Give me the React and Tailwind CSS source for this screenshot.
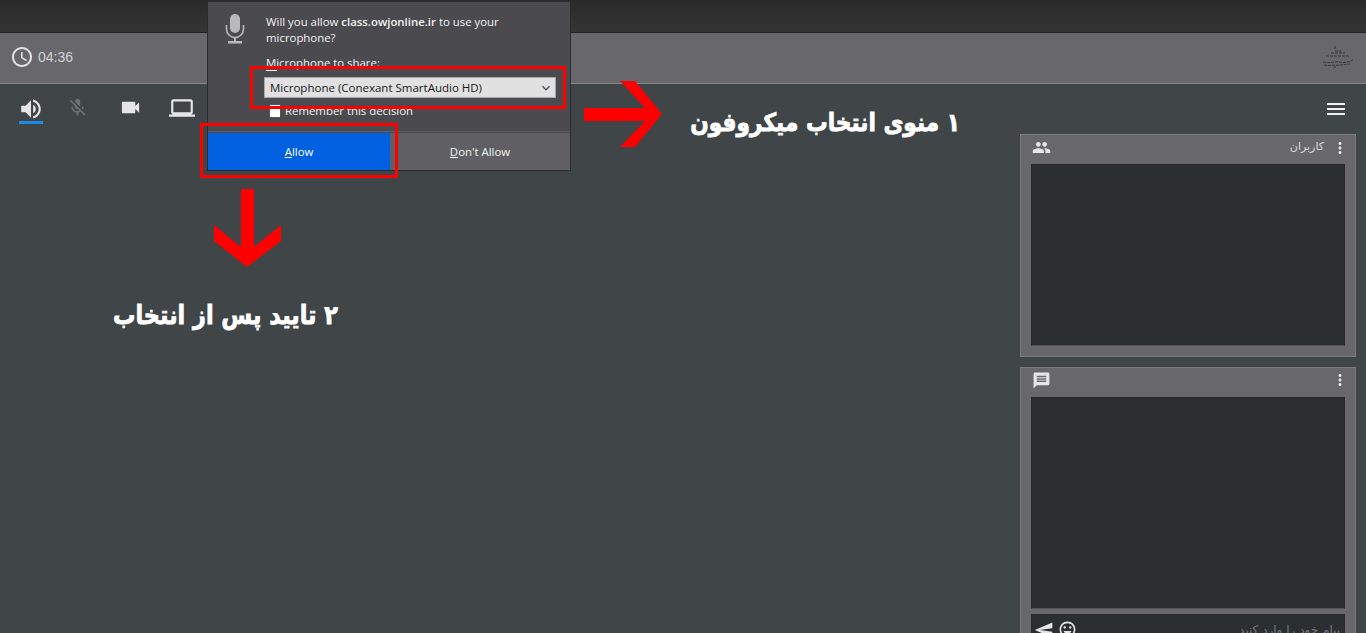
import React from "react";
import { MdVolumeUp, MdMicOff, MdVideocam, MdLaptop, MdMenu, MdPeople, MdMoreVert, MdMessage, MdSend, MdTagFaces, MdAccessTime, MdKeyboardArrowDown } from "react-icons/md";

const persian = { fontFamily: '"DejaVu Sans", sans-serif' };

function Dialog() {
  return (
    <div className="absolute left-[207px] top-[1px] w-[364px] h-[170px] bg-[#4a4a4f] border border-[#2c2c2e] text-[#f4f4f4] text-[11.4px] font-['Open_Sans','Noto_Sans',sans-serif]">
      <svg className="absolute left-[17px] top-[12px]" width="20" height="30" viewBox="0 0 20 30" fill="#b9b9bc">
        <rect x="5" y="0" width="10" height="19" rx="5" />
        <path d="M1.5 11v4a8.5 8.5 0 0 0 17 0v-4" fill="none" stroke="#b9b9bc" strokeWidth="1.6" />
        <path d="M9 23h2v4H9zM3 27h14v2.5H3z" />
      </svg>
      <p className="absolute left-[58px] top-[12px] w-[270px] leading-[16px]">
        Will you allow <b className="font-semibold">class.owjonline.ir</b> to use your microphone?
      </p>
      <p className="absolute left-[58px] top-[53px] leading-[16px]">Microphone to share:</p>
      <div className="absolute left-[56px] top-[75px] w-[292px] h-[21px] bg-[#e1e1e1] border border-[#a8a8a8] flex items-center justify-between pl-[5px] pr-[1px] text-[#1a1a1a] text-[11.5px]">
        <span>Microphone (Conexant SmartAudio HD)</span>
        <MdKeyboardArrowDown size={16} className="text-[#555]" />
      </div>
      <div className="absolute left-[61px] top-[101px] flex items-center gap-[4px] leading-[16px]">
        <span className="w-[12px] h-[14px] bg-white border border-[#555]" />
        <span>Remember this decision</span>
      </div>
      <div className="absolute left-0 right-0 bottom-0 h-[39px] flex border-t border-[#5e5e62] pt-[1px]">
        <button className="w-[182px] bg-[#0060df] text-white"><u>A</u>llow</button>
        <button className="flex-1 bg-[#5f5f64] text-[#f4f4f4]"><u>D</u>on't Allow</button>
      </div>
    </div>
  );
}

function Annotations() {
  return (
    <>
      <div className="absolute left-[250px] top-[66px] w-[316px] h-[43px] border-[3px] border-[#ff0000]" />
      <div className="absolute left-[200px] top-[123px] w-[198px] h-[55px] border-[3px] border-[#ff0000]" />
      <span className="absolute left-[266px] top-[70px] w-[11px] h-px bg-white" />
      <svg className="absolute left-[583px] top-[80px]" width="80" height="68" viewBox="0 0 80 68">
        <path d="M1 28H62L37 1H52L79 34L52 67H37L62 41H1Z" fill="#ff0000" />
      </svg>
      <svg className="absolute left-[213px] top-[188px]" width="70" height="82" viewBox="0 0 70 82">
        <path d="M28 1H41V59L68 37V53L34 79L1 53V37L28 59Z" fill="#ff0000" />
      </svg>
      <p dir="rtl" style={persian} className="absolute left-[660px] w-[300px] top-[103px] text-[21.7px] leading-[40px] font-bold text-white whitespace-nowrap scale-y-115 [-webkit-text-stroke:0.7px_white]">۱ منوی انتخاب میکروفون</p>
      <p dir="rtl" style={persian} className="absolute left-[38px] w-[300px] top-[295px] text-[22.4px] leading-[40px] font-bold text-white whitespace-nowrap scale-y-115 [-webkit-text-stroke:0.7px_white]">۲ تایید پس از انتخاب</p>
    </>
  );
}

function Panel({ className, head, children }) {
  return (
    <section className={`w-[336px] bg-[#68676c] border border-[#7b7b7f] px-[10px] flex flex-col ${className}`}>
      {head}
      {children}
    </section>
  );
}

export default function App() {
  return (
    <div className="relative w-full h-[633px] overflow-hidden bg-[#404548] font-['Liberation_Sans',sans-serif]">
      <div className="h-[33px] bg-gradient-to-b from-[#2a2a2b] to-[#353536] border-b border-[#232324]" />
      <header className="h-[51px] bg-[#68676c] border-b border-[#85858a] flex items-center justify-between pl-[12px] pr-[10px] pb-[2px]">
        <div className="flex items-center gap-[4px] text-[#cdd3d8] text-[14px]">
          <MdAccessTime size={24} className="text-[#e2e2e4] -ml-[2px]" />
          <span>04:36</span>
        </div>
        <svg width="34" height="24" viewBox="0 0 34 24" fill="none" stroke="#2b2b2f" strokeWidth="0.8" strokeDasharray="3 1">
          <path d="M4 11h24M1 17c6 2 12-1 16 0s8 1 14-2M2 20c8 1 16 0 26-1M9 8h14M13 6h6M13 1v3M13 21v2" />
        </svg>
      </header>

      <div className="h-[50px] flex items-center justify-between pl-[19px] pr-[18px]">
        <div className="flex items-center text-[#e6e6e8] pb-[3px]">
          <div className="relative w-[24px] h-[24px]">
            <MdVolumeUp size={26} className="-ml-[1px]" />
            <span className="absolute left-0 top-[25px] w-[24px] h-[3px] bg-[#1e88e5]" />
          </div>
          <MdMicOff size={21} className="text-[#6e7174] ml-[24px]" />
          <MdVideocam size={23} className="ml-[31px]" />
          <MdLaptop size={26} className="ml-[27px]" />
        </div>
        <MdMenu size={24} className="text-[#f0f0f0]" />
      </div>

      <aside className="flex flex-col items-end pr-[10px] gap-[10px]">
        <Panel className="h-[223px]" head={
          <div className="h-[29px] flex items-center justify-between shrink-0 pb-[4px]">
            <MdPeople size={19} className="text-[#e6e6e8] ml-[1px]" />
            <div className="flex items-center gap-[7px] text-[#dcdcdf] text-[11px]">
              <span dir="rtl" style={persian}>کاربران</span>
              <MdMoreVert size={18} className="text-[#e6e6e8] -mr-[4px]" />
            </div>
          </div>
        }>
          <div className="h-[182px] bg-[#2c2f32] border border-[#26282b] border-b-[#55575a]" />
        </Panel>
        <Panel className="h-[300px]" head={
          <div className="h-[29px] flex items-center justify-between shrink-0 pb-[5px]">
            <MdMessage size={19} className="text-[#e6e6e8] ml-[1px]" />
            <MdMoreVert size={18} className="text-[#e6e6e8] -mr-[4px]" />
          </div>
        }>
          <div className="h-[212px] bg-[#2c2f32] border border-[#26282b] border-b-[#55575a] shrink-0" />
          <div className="mt-[5px] h-[40px] bg-[#2c2f32] border border-[#26282b] flex justify-between pl-[2px] pr-[4px] pt-[5px]">
            <div className="flex items-start gap-[4px] text-[#e6e6e8]">
              <MdSend size={20} className="rotate-180" />
              <MdTagFaces size={19} />
            </div>
            <span dir="rtl" style={persian} className="text-[12px] leading-[20px] text-[#74777a]">پیام خود را وارد کنید</span>
          </div>
        </Panel>
      </aside>

      <Dialog />
      <Annotations />
    </div>
  );
}
